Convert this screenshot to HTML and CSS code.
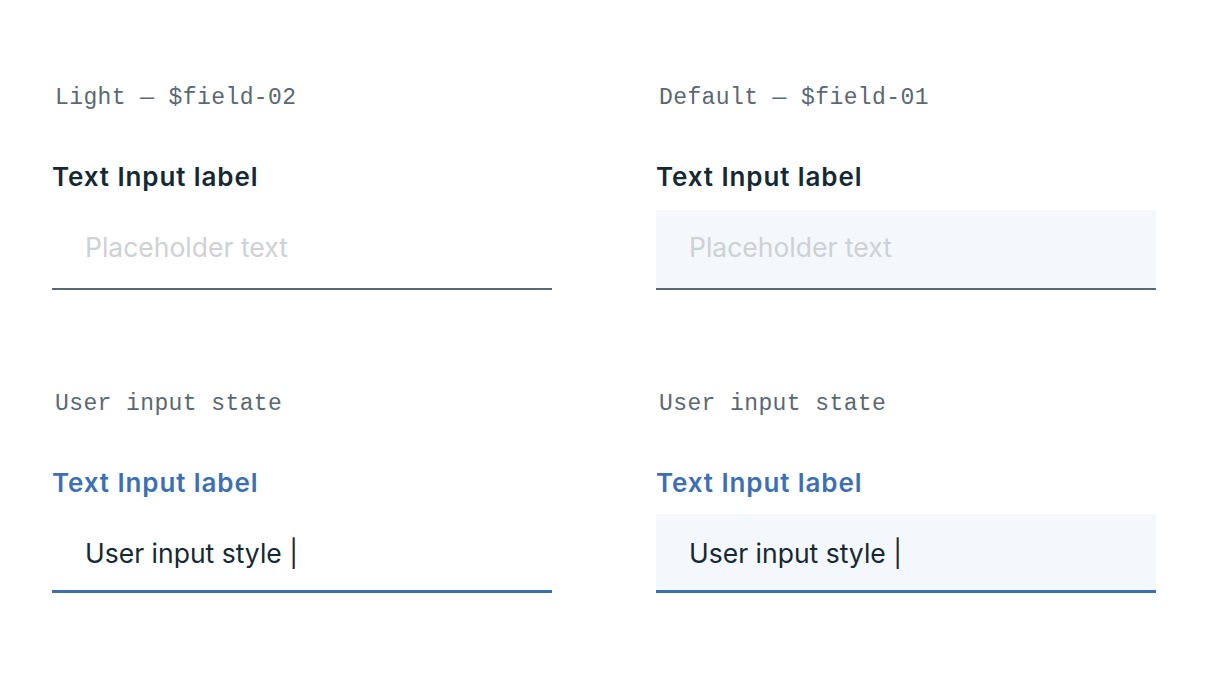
FILE: index.html
```html
<!DOCTYPE html>
<html lang="en">
<head>
<meta charset="utf-8">
<title>Text Input</title>
<link rel="stylesheet" href="styles.css">
</head>
<body>
<div class="page">
  <section class="group">
    <div class="caption">Light — $field-02</div>
    <div class="label">Text Input label</div>
    <div class="field field-light"><span class="placeholder">Placeholder text</span></div>
  </section>
  <section class="group">
    <div class="caption">Default — $field-01</div>
    <div class="label">Text Input label</div>
    <div class="field field-default"><span class="placeholder">Placeholder text</span></div>
  </section>
  <section class="group group-second">
    <div class="caption">User input state</div>
    <div class="label label-active">Text Input label</div>
    <div class="field field-light field-active"><span class="value">User input style |</span></div>
  </section>
  <section class="group group-second">
    <div class="caption">User input state</div>
    <div class="label label-active">Text Input label</div>
    <div class="field field-default field-active"><span class="value">User input style |</span></div>
  </section>
</div>
</body>
</html>
```

FILE: styles.css
```css
html, body {
  margin: 0;
  padding: 0;
  background: #ffffff;
}
.page {
  display: grid;
  grid-template-columns: 500px 500px;
  column-gap: 104px;
  row-gap: 99px;
  padding: 83px 0 0 52px;
}
.group {
  display: flex;
  flex-direction: column;
}
.caption {
  font-family: "Liberation Mono", "DejaVu Sans Mono", monospace;
  font-size: 23px;
  line-height: 30px;
  letter-spacing: 0.4px;
  color: #5a6872;
  padding-left: 3px;
}
.label {
  margin-top: 48px;
  font-family: Inter, "Noto Sans", sans-serif;
  font-weight: 600;
  font-size: 26px;
  line-height: 32px;
  letter-spacing: 0.9px;
  color: #152935;
}
.label-active {
  color: #3d70b2;
}
.field {
  margin-top: 17px;
  height: 78px;
  box-sizing: content-box;
  border-bottom: 2px solid #5a6872;
  display: flex;
  align-items: center;
  padding-left: 33px;
  font-family: Inter, "Noto Sans", sans-serif;
  font-size: 26.5px;
}
.field-light {
  background: #ffffff;
}
.field-default {
  background: #f4f7fb;
}
.field-active {
  margin-top: 15px;
  height: 76px;
  border-bottom: 3px solid #3d70b2;
}
.placeholder {
  color: #cdd1d4;
  position: relative;
  top: -2px;
}
.value {
  color: #152935;
  position: relative;
  top: 1px;
}
```
